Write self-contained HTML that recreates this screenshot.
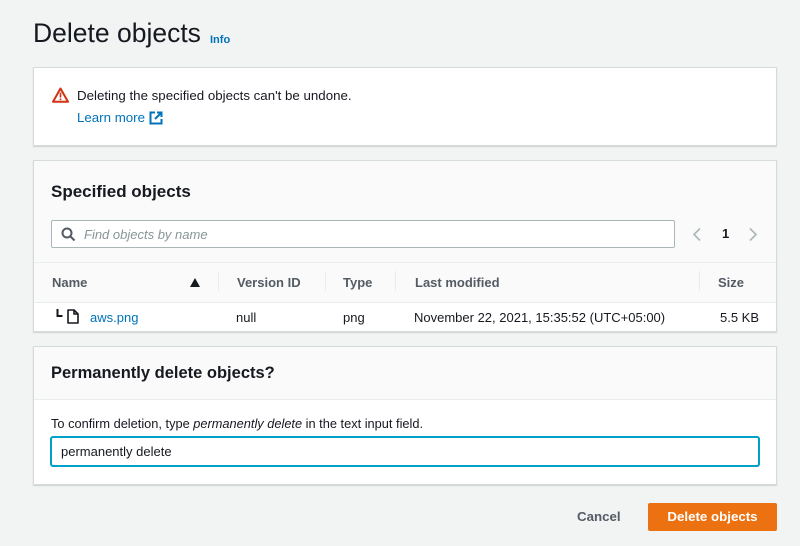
<!DOCTYPE html>
<html><head><meta charset="utf-8"><style>
*{box-sizing:border-box;margin:0;padding:0}
body{width:800px;height:546px;background:#f2f3f3;font-family:"Liberation Sans",Arial,sans-serif;color:#16191f;position:relative;overflow:hidden;font-size:14px}
.abs{position:absolute}
h1{position:absolute;left:33px;top:18px;font-size:26.5px;font-weight:400;color:#16191f}
.info{position:absolute;left:210px;top:34px;font-size:11px;font-weight:700;color:#0073bb}
.panel{position:absolute;left:33px;width:744px;background:#fff;border:1px solid #d5dbdb;box-shadow:0 1px 1px rgba(0,28,36,.15)}
.th{position:absolute;top:275px;font-weight:700;color:#545b64;font-size:13px}
.td{position:absolute;top:310px;font-size:13px;color:#16191f}
.sep{position:absolute;top:271px;width:1px;height:20px;background:#eaeded}
</style></head><body>
<h1>Delete objects</h1><div class="info">Info</div>

<div class="panel" style="top:67px;height:79px">
  <svg class="abs" style="left:18px;top:19px" width="17" height="16" viewBox="0 0 17 16"><path d="M8.5 1.5L16 14.8H1Z" fill="none" stroke="#d13212" stroke-width="2" stroke-linejoin="round"/><rect x="7.7" y="5.5" width="1.6" height="5" fill="#d13212"/><rect x="7.7" y="11.5" width="1.6" height="1.6" fill="#d13212"/></svg>
  <div class="abs" style="left:43px;top:20px;font-size:13.3px;color:#16191f">Deleting the specified objects can't be undone.</div>
  <div class="abs" style="left:43px;top:42px;font-size:13.3px;color:#0073bb">Learn more</div>
  <svg class="abs" style="left:115px;top:43px" width="14" height="14" viewBox="0 0 14 14"><path d="M6 1.5H1.5v11h11V8" fill="none" stroke="#0073bb" stroke-width="2"/><path d="M8 1.5h4.5V6M12.5 1.5L6 8" fill="none" stroke="#0073bb" stroke-width="2"/></svg>
</div>

<div class="panel" style="top:160px;height:172px;background:#fafafa"></div>
<div class="abs" style="left:34px;top:302px;width:742px;height:29px;background:#fff;border-top:1px solid #eaeded"></div>
<div class="abs" style="left:34px;top:262px;width:742px;height:1px;background:#eaeded"></div>
<div class="abs" style="left:51px;top:182px;font-size:17px;font-weight:700">Specified objects</div>
<div class="abs" style="left:51px;top:220px;width:624px;height:28px;background:#fff;border:1px solid #aab7b8;border-radius:2px"></div>
<svg class="abs" style="left:61px;top:227px" width="15" height="15" viewBox="0 0 15 15"><circle cx="6" cy="6" r="4.5" fill="none" stroke="#545b64" stroke-width="2"/><path d="M9.5 9.5L13.5 13.5" stroke="#545b64" stroke-width="2"/></svg>
<div class="abs" style="left:84px;top:227px;font-size:13px;font-style:italic;color:#879596">Find objects by name</div>
<svg class="abs" style="left:692px;top:227px" width="10" height="15" viewBox="0 0 10 15"><path d="M8 1.5L2 7.5l6 6" fill="none" stroke="#aab7b8" stroke-width="1.6"/></svg>
<div class="abs" style="left:722px;top:226px;font-weight:700;font-size:13px">1</div>
<svg class="abs" style="left:748px;top:227px" width="10" height="15" viewBox="0 0 10 15"><path d="M2 1.5l6 6-6 6" fill="none" stroke="#aab7b8" stroke-width="1.6"/></svg>

<div class="th" style="left:52px">Name</div>
<svg class="abs" style="left:190px;top:278px" width="10" height="9" viewBox="0 0 10 9"><path d="M5 0L10 9H0Z" fill="#16191f"/></svg>
<div class="sep" style="left:218px"></div>
<div class="th" style="left:237px">Version ID</div>
<div class="sep" style="left:325px"></div>
<div class="th" style="left:343px">Type</div>
<div class="sep" style="left:395px"></div>
<div class="th" style="left:415px">Last modified</div>
<div class="sep" style="left:699px"></div>
<div class="th" style="left:718px">Size</div>

<svg class="abs" style="left:56px;top:308px" width="26" height="16" viewBox="0 0 26 16"><path d="M1.5 1v7h5" fill="none" stroke="#16191f" stroke-width="2"/><path d="M12 2h6l4 4v9H12Z M18 2v4h4" fill="none" stroke="#16191f" stroke-width="1.6" stroke-linejoin="round"/></svg>
<div class="td" style="left:90px;color:#0073bb">aws.png</div>
<div class="td" style="left:236px">null</div>
<div class="td" style="left:343px">png</div>
<div class="td" style="left:414px">November 22, 2021, 15:35:52 (UTC+05:00)</div>
<div class="td" style="left:720px">5.5 KB</div>

<div class="panel" style="top:346px;height:139px"></div>
<div class="abs" style="left:34px;top:347px;width:742px;height:53px;background:#fafafa;border-bottom:1px solid #eaeded"></div>
<div class="abs" style="left:51px;top:364px;font-size:16.5px;font-weight:700">Permanently delete objects?</div>
<div class="abs" style="left:51px;top:416px;font-size:12.8px">To confirm deletion, type <i>permanently delete</i> in the text input field.</div>
<div class="abs" style="left:51px;top:437px;width:708px;height:29px;background:#fff;border:1px solid #00a1c9;border-radius:2px;box-shadow:0 0 0 1px #00a1c9"></div>
<div class="abs" style="left:61px;top:444px;font-size:13px">permanently delete</div>

<div class="abs" style="left:577px;top:509px;font-size:13.3px;font-weight:700;color:#545b64">Cancel</div>
<div class="abs" style="left:648px;top:503px;width:129px;height:28px;background:#ec7211;border-radius:2px;color:#fff;font-weight:700;font-size:13.3px;text-align:center;line-height:28px">Delete objects</div>
</body></html>
